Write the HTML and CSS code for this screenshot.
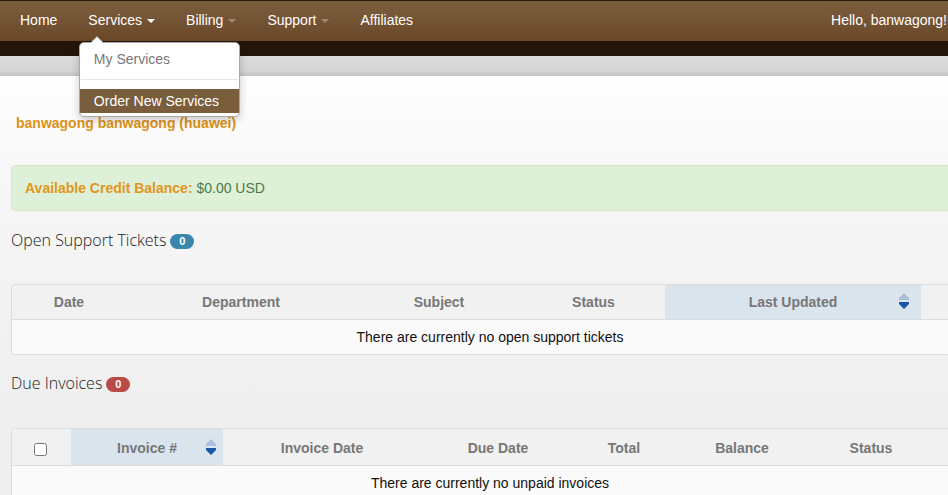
FILE: index.html
```html
<!DOCTYPE html>
<html lang="en">
<head>
<meta charset="utf-8">
<title>Client Area</title>
<link rel="stylesheet" href="styles.css">
</head>
<body>
<div class="page">
  <header class="header">
    <nav class="navbar">
      <ul class="nav">
        <li><a class="nav-link" href="#">Home</a></li>
        <li class="open"><a class="nav-link" href="#">Services <span class="caret"></span></a>
          <div class="dropdown">
            <a class="dd-item" href="#">My Services</a>
            <div class="dd-divider"></div>
            <a class="dd-item active" href="#">Order New Services</a>
          </div>
        </li>
        <li><a class="nav-link" href="#">Billing <span class="caret dim"></span></a></li>
        <li><a class="nav-link" href="#">Support <span class="caret dim"></span></a></li>
        <li><a class="nav-link" href="#">Affiliates</a></li>
      </ul>
      <div class="greeting">Hello, banwagong!</div>
    </nav>
    <div class="subbar"></div>
    <div class="greybar"></div>
  </header>

  <main class="content">
    <div class="client-name">banwagong banwagong (huawei)</div>

    <div class="alert">
      <strong class="alert-label">Available Credit Balance:</strong> <span class="alert-value">$0.00 USD</span>
    </div>

    <h3 class="section-title">Open Support Tickets <span class="badge badge-info">0</span></h3>

    <table class="data-table tickets">
      <thead>
        <tr>
          <th class="c-date">Date</th>
          <th class="c-dept">Department</th>
          <th class="c-subj">Subject</th>
          <th class="c-status">Status</th>
          <th class="c-updated sorted">Last Updated
            <svg class="sort" width="10" height="17" viewBox="0 0 10 17"><polygon class="up" points="5,0 10,5 10,7 0,7 0,5"/><polygon class="down" points="0,9 10,9 10,11 5,16 0,11"/></svg>
          </th>
          <th class="c-extra"></th>
        </tr>
      </thead>
      <tbody>
        <tr><td colspan="6">There are currently no open support tickets</td></tr>
      </tbody>
    </table>

    <h3 class="section-title">Due Invoices <span class="badge badge-danger">0</span></h3>

    <table class="data-table invoices">
      <thead>
        <tr>
          <th class="c-check"><input type="checkbox" class="check"></th>
          <th class="c-inv sorted">Invoice #
            <svg class="sort" width="10" height="17" viewBox="0 0 10 17"><polygon class="up" points="5,0 10,5 10,7 0,7 0,5"/><polygon class="down" points="0,9 10,9 10,11 5,16 0,11"/></svg>
          </th>
          <th class="c-invdate">Invoice Date</th>
          <th class="c-due">Due Date</th>
          <th class="c-total">Total</th>
          <th class="c-bal">Balance</th>
          <th class="c-stat">Status</th>
          <th class="c-more"></th>
        </tr>
      </thead>
      <tbody>
        <tr><td colspan="8">There are currently no unpaid invoices</td></tr>
      </tbody>
    </table>
  </main>
</div>
</body>
</html>
```

FILE: styles.css
```css
html, body {
  margin: 0;
  padding: 0;
  overflow: hidden;
}

body {
  font-family: "Liberation Sans", Arial, sans-serif;
  font-size: 14px;
  color: #222;
  background: #efefef;
}

.page {
  width: 969px;
}

/* ---------- header ---------- */
.navbar {
  height: 40px;
  border-top: 1px solid #2a1a0c;
  background: linear-gradient(#7c5f3f, #6a4828);
  display: flex;
  justify-content: space-between;
  align-items: center;
}

.nav {
  list-style: none;
  margin: 0;
  padding: 0 0 0 4.5px;
  display: flex;
  height: 100%;
}

.nav li {
  position: relative;
  display: flex;
  align-items: center;
}

.nav-link {
  display: flex;
  align-items: center;
  box-sizing: border-box;
  padding: 0 15.5px 2px;
  color: #fff;
  text-decoration: none;
  height: 100%;
  line-height: 20px;
}

.caret {
  display: inline-block;
  width: 0;
  height: 0;
  margin-left: 5px;
  margin-top: 2px;
  border-top: 4px solid #fff;
  border-left: 4px solid transparent;
  border-right: 4px solid transparent;
}

.caret.dim {
  border-top-color: #a08a74;
}

.greeting {
  color: #fff;
  padding-right: 22px;
  padding-bottom: 2px;
}

.subbar {
  height: 15px;
  background: #231509;
}

.greybar {
  height: 20px;
  background: linear-gradient(#dcdcdc, #d6d6d6 70%, #c4c4c4);
}

/* ---------- dropdown ---------- */
.dropdown {
  position: absolute;
  left: 6px;
  top: 41px;
  width: 159px;
  padding: 5px 0 3px;
  background: #fff;
  border: 1px solid #a9a9a9;
  border-radius: 5px;
  box-shadow: 0 3px 8px rgba(0, 0, 0, 0.2);
  z-index: 10;
}

.dropdown::before {
  content: "";
  position: absolute;
  left: 10px;
  top: -7px;
  border-left: 7px solid transparent;
  border-right: 7px solid transparent;
  border-bottom: 7px solid #a9a9a9;
}

.dropdown::after {
  content: "";
  position: absolute;
  left: 11px;
  top: -6px;
  border-left: 6px solid transparent;
  border-right: 6px solid transparent;
  border-bottom: 6px solid #fff;
}

.dd-item {
  display: block;
  padding: 0 14px;
  line-height: 22px;
  color: #777;
  text-decoration: none;
  white-space: nowrap;
}

.dd-item.active {
  background: #7a5d3c;
  color: #fff;
  line-height: 24px;
}

.dd-divider {
  height: 1px;
  margin: 9px 1px;
  background: #e5e5e5;
}

/* ---------- content ---------- */
.content {
  padding: 37px 0 40px 11px;
  background: linear-gradient(#fefefe, #f6f6f6 120px, #efefef 330px);
}

.client-name {
  padding-left: 5px;
  font-weight: bold;
  color: #dd9216;
  line-height: 20px;
}

.alert {
  margin-top: 32px;
  padding: 13px 13px;
  line-height: 18px;
  background: #dff0d8;
  border: 1px solid #d4e8c8;
  border-radius: 4px;
}

.alert-label {
  color: #e0961b;
}

.alert-value {
  color: #4a7a4a;
}

.section-title {
  margin: 17px 0 0;
  font-family: "Open Sans", "Liberation Sans", sans-serif;
  font-weight: 300;
  font-size: 16px;
  line-height: 24px;
  color: #222;
  display: flex;
  align-items: center;
}

.badge {
  display: inline-block;
  margin-left: 4px;
  margin-top: 3px;
  min-width: 24px;
  box-sizing: border-box;
  height: 15px;
  line-height: 15px;
  padding: 0 7px;
  border-radius: 8px;
  font-family: "Liberation Sans", Arial, sans-serif;
  font-size: 11px;
  font-weight: bold;
  color: #fff;
  text-align: center;
}

.badge-info {
  background: #3a87ad;
}

.badge-danger {
  background: #b94a48;
}

/* ---------- tables ---------- */
.data-table {
  width: 958px;
  margin-top: 32px;
  border-collapse: separate;
  border-spacing: 0;
  table-layout: fixed;
  border: 1px solid #dcdcdc;
  border-radius: 3px;
  background: #fafafa;
}

.data-table + .section-title {
  margin-top: 16px;
}

.data-table th {
  height: 34px;
  padding: 0;
  background: #f1f1f1;
  color: #777;
  font-weight: bold;
  text-align: center;
  border-bottom: 1px solid #dcdcdc;
  position: relative;
}

.data-table th.sorted {
  background: #d9e4ed;
}

.data-table td {
  height: 34px;
  padding: 0;
  text-align: center;
  color: #111;
}

.invoices {
  margin-top: 33px;
}

.invoices th {
  height: 37px;
  box-sizing: border-box;
  padding-top: 2px;
}

.invoices td {
  height: 34px;
}

.sort {
  position: absolute;
  right: 12px;
  top: 8px;
  display: block;
}

.sort .up {
  fill: #a9c1dd;
}

.sort .down {
  fill: #1b56a6;
}

.invoices .c-inv .sort {
  right: 7px;
  top: 10px;
}

.tickets .c-date { width: 114px; }
.tickets .c-dept { width: 230px; }
.tickets .c-subj { width: 166px; }
.tickets .c-status { width: 143px; }
.tickets .c-updated { width: 256px; }

.invoices .c-check { width: 59px; }
.invoices .c-inv { width: 152px; }
.invoices .c-invdate { width: 198px; }
.invoices .c-due { width: 154px; }
.invoices .c-total { width: 98px; }
.invoices .c-bal { width: 138px; }
.invoices .c-stat { width: 120px; }

.check {
  margin: 0 2px 0 0;
  width: 13px;
  height: 13px;
  vertical-align: middle;
}
```
